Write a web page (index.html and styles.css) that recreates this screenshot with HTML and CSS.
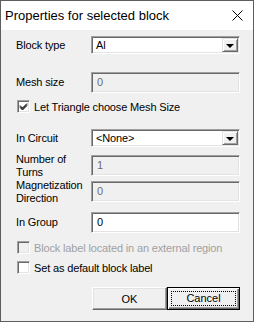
FILE: index.html
```html
<!DOCTYPE html>
<html lang="en">
<head>
  <meta charset="UTF-8">
  <title>Properties for selected block</title>
  <link rel="stylesheet" href="styles.css">
</head>
<body>
  <div class="window">
    <header class="titlebar">
      <span class="title">Properties for selected block</span>
      <svg class="close" width="11" height="11" viewBox="0 0 11 11">
        <path d="M0.5 0.5 L10.5 10.5 M10.5 0.5 L0.5 10.5" stroke="#000" stroke-width="1" fill="none"/>
      </svg>
    </header>

    <main class="content">
      <div class="row row-type">
        <label class="label">Block type</label>
        <div class="combo">
          <span class="combo-value">Al</span>
          <span class="drop-btn"><span class="arrow"></span></span>
        </div>
      </div>

      <div class="row row-mesh">
        <label class="label">Mesh size</label>
        <div class="textbox disabled">0</div>
      </div>

      <div class="check-row row-auto">
        <span class="checkbox">
          <svg width="9" height="9" viewBox="0 0 9 9">
            <path d="M1 3.5 L3.5 6 L8 1.5 M1 4.5 L3.5 7 L8 2.5 M1 5.5 L3.5 8 L8 3.5" stroke="#000" stroke-width="1" fill="none"/>
          </svg>
        </span>
        <span class="check-label">Let Triangle choose Mesh Size</span>
      </div>

      <div class="row row-circuit">
        <label class="label">In Circuit</label>
        <div class="combo">
          <span class="combo-value">&lt;None&gt;</span>
          <span class="drop-btn"><span class="arrow"></span></span>
        </div>
      </div>

      <div class="row row-turns">
        <label class="label two-line">Number of<br>Turns</label>
        <div class="textbox disabled">1</div>
      </div>

      <div class="row row-magnet">
        <label class="label two-line">Magnetization<br>Direction</label>
        <div class="textbox disabled">0</div>
      </div>

      <div class="row row-group">
        <label class="label">In Group</label>
        <div class="textbox">0</div>
      </div>

      <div class="check-row row-external disabled">
        <span class="checkbox"></span>
        <span class="check-label">Block label located in an external region</span>
      </div>

      <div class="check-row row-default">
        <span class="checkbox"></span>
        <span class="check-label">Set as default block label</span>
      </div>

      <div class="buttons">
        <button class="btn">OK</button>
        <button class="btn btn-focus"><span class="focus-ring">Cancel</span></button>
      </div>
    </main>
  </div>
</body>
</html>
```

FILE: styles.css
```css
* {
    margin: 0;
    padding: 0;
    box-sizing: border-box;
}

body {
    font-family: "Liberation Sans", Arial, sans-serif;
    font-size: 11px;
    letter-spacing: -0.15px;
    color: #000;
    background-color: #ffffff;
}

/* Window frame */
.window {
    width: 254px;
    height: 322px;
    border: 1px solid #5e5e5e;
    background-color: #f0f0f0;
    display: flex;
    flex-direction: column;
}

.titlebar {
    height: 29px;
    background-color: #ffffff;
    display: flex;
    align-items: center;
    justify-content: space-between;
    padding: 0 10px 0 4px;
}

.title {
    font-size: 13px;
    letter-spacing: 0;
    color: #000;
    white-space: nowrap;
}

.close {
    display: block;
}

/* Content */
.content {
    padding: 0 13px 0 15px;
    display: flex;
    flex-direction: column;
}

.row {
    display: flex;
    align-items: center;
    height: 21px;
}

.label {
    width: 75px;
    line-height: 13px;
    white-space: nowrap;
}

.row-type { margin-top: 6px; height: 18px; }
.row-mesh { margin-top: 18px; }
.row-auto { margin-top: 7px; }
.row-circuit { margin-top: 16px; height: 18px; }
.row-turns { margin-top: 8px; }
.row-magnet { margin-top: 5px; }
.row-group { margin-top: 10px; }
.row-external { margin-top: 8px; }
.row-default { margin-top: 7px; }

/* Combo box */
.combo {
    width: 149px;
    height: 18px;
    background-color: #fff;
    border: 1px solid;
    border-color: #a0a0a0 #ffffff #ffffff #a0a0a0;
    box-shadow: inset 1px 1px #696969, inset -1px -1px #e3e3e3;
    display: flex;
    align-items: center;
    justify-content: space-between;
    padding: 0 1px 0 4px;
}

.drop-btn {
    width: 16px;
    height: 14px;
    background-color: #f0f0f0;
    border: 1px solid;
    border-color: #e3e3e3 #696969 #696969 #e3e3e3;
    box-shadow: inset 1px 1px #fff, inset -1px -1px #a0a0a0;
    display: flex;
    align-items: center;
    justify-content: center;
}

.arrow {
    width: 0;
    height: 0;
    border-left: 4px solid transparent;
    border-right: 4px solid transparent;
    border-top: 4px solid #000;
    margin-top: 1px;
}

/* Text boxes */
.textbox {
    width: 149px;
    height: 21px;
    background-color: #fff;
    border: 1px solid;
    border-color: #a0a0a0 #ffffff #ffffff #a0a0a0;
    box-shadow: inset 1px 1px #696969, inset -1px -1px #e3e3e3;
    padding: 2px 5px;
    line-height: 15px;
}

.textbox.disabled {
    background-color: #f0f0f0;
    color: #6d6d6d;
}

/* Checkboxes */
.check-row {
    display: flex;
    align-items: center;
    height: 13px;
    padding-left: 1px;
    white-space: nowrap;
}

.checkbox {
    flex: none;
    width: 13px;
    height: 13px;
    background-color: #fff;
    border: 1px solid;
    border-color: #a0a0a0 #ffffff #ffffff #a0a0a0;
    box-shadow: inset 1px 1px #696969, inset -1px -1px #e3e3e3;
    display: flex;
    align-items: center;
    justify-content: center;
    margin-right: 4px;
}

.check-row.disabled .checkbox {
    background-color: #f0f0f0;
}

.check-row.disabled .check-label {
    color: #a0a0a0;
}

/* Buttons */
.buttons {
    display: flex;
    justify-content: flex-end;
    margin-top: 13px;
}

.btn {
    font-family: "Liberation Sans", Arial, sans-serif;
    font-size: 11px;
    color: #000;
    width: 75px;
    height: 23px;
    background-color: #f0f0f0;
    border: 1px solid;
    border-color: #ffffff #696969 #696969 #ffffff;
    box-shadow: inset -1px -1px #a0a0a0, inset 1px 1px #e3e3e3;
}

.btn-focus {
    width: 73px;
    border: 1px solid #000;
    box-shadow: inset 1px 1px #fff, inset -1px -1px #696969, inset -2px -2px #a0a0a0;
    padding: 3px;
}

.focus-ring {
    display: block;
    height: 100%;
    border: 1px dotted #000;
    line-height: 13px;
}
```
